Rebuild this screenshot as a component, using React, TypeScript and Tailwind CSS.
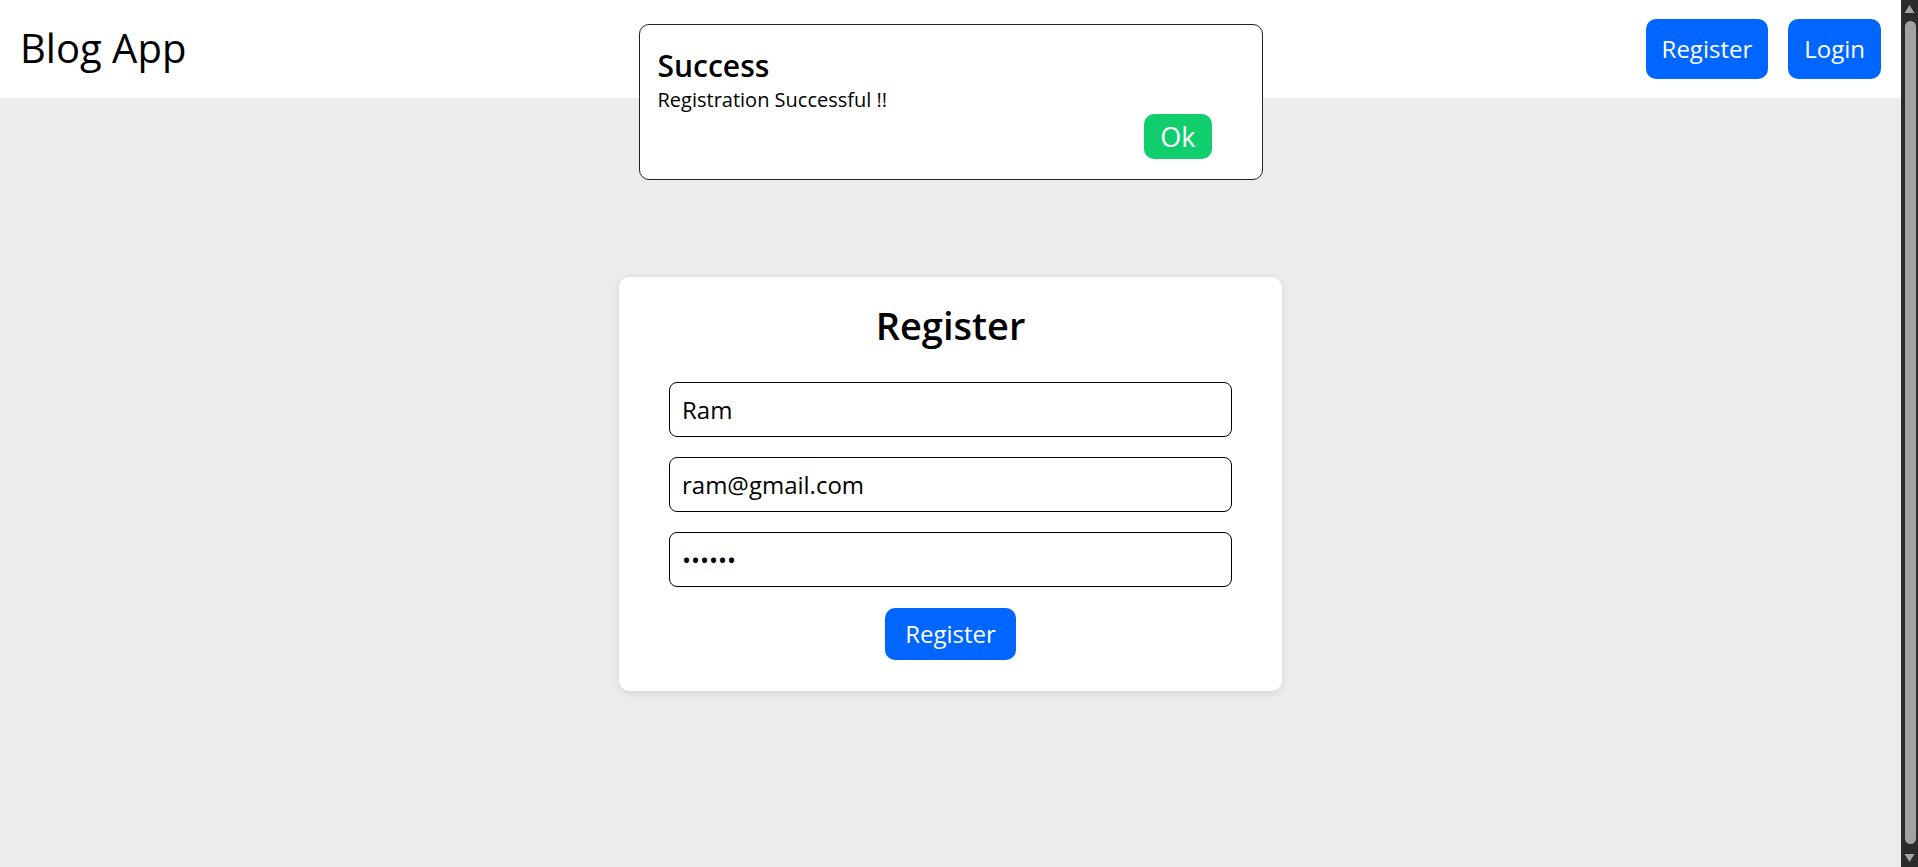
import { useState } from "react";

function Scrollbar() {
  return (
    <div className="flex h-full w-[17px] shrink-0 flex-col items-center bg-[#2b2b2b] py-[4px]">
      <svg width="11" height="10" viewBox="0 0 11 10" className="shrink-0">
        <path d="M5.5 1 L10.5 9 L0.5 9 Z" fill="#a3a3a3" />
      </svg>
      <div className="mt-[7px] mb-[9px] ml-[1px] w-[11px] flex-1 rounded-full bg-[#a3a3a3]" />
      <svg width="11" height="10" viewBox="0 0 11 10" className="shrink-0">
        <path d="M0.5 1 L10.5 1 L5.5 9 Z" fill="#a3a3a3" />
      </svg>
    </div>
  );
}

export default function App() {
  const [name, setName] = useState("Ram");
  const [email, setEmail] = useState("ram@gmail.com");
  const [password, setPassword] = useState("123456");
  const [showAlert, setShowAlert] = useState(true);

  return (
    <div className="flex h-screen w-full overflow-hidden font-['Open_Sans',sans-serif] text-black">
      <div className="relative flex min-w-0 flex-1 flex-col bg-[#ececec]">
        <header className="flex h-[98px] shrink-0 items-center justify-between bg-white pl-5 pr-5">
          <h1 className="mb-[2px] text-[40px] leading-[54px] font-normal">Blog App</h1>
          <nav className="flex gap-5">
            <button className="h-[60px] rounded-[10px] bg-[#0066ff] px-4 text-[24px] text-white">
              Register
            </button>
            <button className="h-[60px] rounded-[10px] bg-[#0066ff] px-4 text-[24px] text-white">
              Login
            </button>
          </nav>
        </header>

        {showAlert && (
          <div className="absolute top-[24px] left-1/2 w-[624px] -translate-x-1/2 rounded-[10px] border border-[#222] bg-white pt-[20px] pr-[18px] pb-[20px] pl-[18px]">
            <h2 className="text-[30px] leading-[41px] font-semibold">Success</h2>
            <p className="text-[20px] leading-[28px]">Registration Successful !!</p>
            <div className="flex justify-end pr-8">
              <button
                onClick={() => setShowAlert(false)}
                className="h-[45px] rounded-[10px] bg-[#10ce6e] px-4 text-[27px] leading-none text-white"
              >
                Ok
              </button>
            </div>
          </div>
        )}

        <main className="flex flex-1 justify-center pt-[179px]">
          <form
            onSubmit={(e) => {
              e.preventDefault();
              setShowAlert(true);
            }}
            className="flex h-fit w-[663px] flex-col items-center rounded-[11px] bg-white px-[50px] pt-[21px] pb-[31px] shadow-[0_2px_8px_rgba(0,0,0,0.1)]"
          >
            <h2 className="mb-[30px] text-[38px] leading-[54px] font-semibold">Register</h2>
            <div className="flex w-full flex-col gap-5">
              <input
                value={name}
                onChange={(e) => setName(e.target.value)}
                className="h-[55px] w-full rounded-[8px] border border-black bg-white px-3 text-[24px] outline-none"
              />
              <input
                value={email}
                onChange={(e) => setEmail(e.target.value)}
                className="h-[55px] w-full rounded-[8px] border border-black bg-white px-3 text-[24px] outline-none"
              />
              <input
                type="password"
                value={password}
                onChange={(e) => setPassword(e.target.value)}
                className="h-[55px] w-full rounded-[8px] border border-black bg-white px-3 text-[24px] outline-none"
              />
            </div>
            <button
              type="submit"
              className="mt-[21px] h-[52px] rounded-[10px] bg-[#0066ff] px-5 text-[24px] text-white"
            >
              Register
            </button>
          </form>
        </main>
      </div>
      <Scrollbar />
    </div>
  );
}
